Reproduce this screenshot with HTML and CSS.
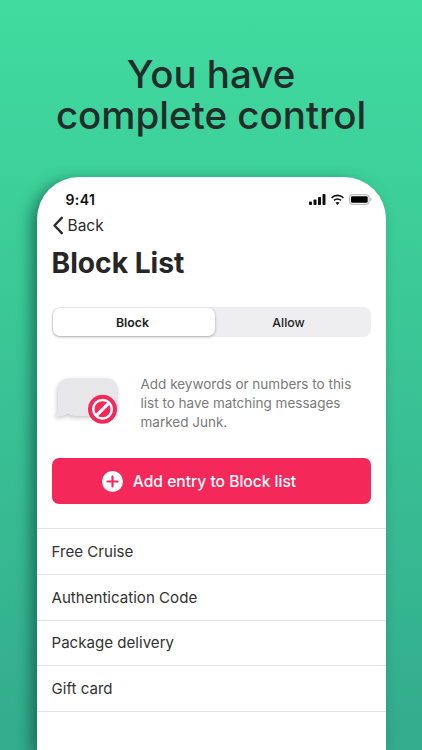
FILE: index.html
```html
<!DOCTYPE html>
<html lang="en">
<head>
<meta charset="utf-8">
<title>Block List</title>
<link rel="stylesheet" href="styles.css">
</head>
<body>
<main class="poster">
  <h1 class="headline">You have<br>complete control</h1>
  <section class="phone">
    <div class="status">
      <span class="time">9:41</span>
      <span class="status-icons">
        <svg class="signal" width="17" height="11" viewBox="0 0 17 11"><rect x="0" y="7.5" width="3" height="3.5" rx=".8"/><rect x="4.5" y="5.5" width="3" height="5.5" rx=".8"/><rect x="9" y="3" width="3" height="8" rx=".8"/><rect x="13.5" y="0" width="3" height="11" rx=".8"/></svg>
        <svg class="wifi" width="15" height="11" viewBox="0 0 15 11"><path d="M7.5 2.3c2.1 0 4 .8 5.4 2.1l1.1-1.2A9.6 9.6 0 0 0 7.500.6 9.600 9.600 0 0 0 1 3.200l1.100 1.200a7.900 7.900 0 0 1 5.400-2.100zM7.500 5.800c1.100 0 2.100.4 2.900 1.100l1.100-1.200a5.900 5.900 0 0 0-8 0l1.100 1.200c.8-.7 1.800-1.100 2.900-1.100zM7.500 11l2-2.200a3 3 0 0 0-4 0z"/></svg>
        <svg class="battery" width="23" height="11" viewBox="0 0 24 11"><rect x=".5" y=".5" width="20.500" height="10" rx="2.800" fill="none" stroke="#aaa"/><rect x="2" y="2" width="17.500" height="7" rx="1.500" fill="#000"/><path d="M22.300 3.800c.8.300 1.300 1 1.300 1.700s-.5 1.400-1.300 1.700z" fill="#aaa"/></svg>
      </span>
    </div>
    <a class="back">
      <svg width="12" height="19" viewBox="0 0 12 19"><path d="M9.800 1.800 2.500 9.500l7.300 7.700" fill="none" stroke="#2b2b2b" stroke-width="2.400" stroke-linecap="round" stroke-linejoin="round"/></svg>
      <span>Back</span>
    </a>
    <h2 class="title">Block List</h2>
    <div class="segments">
      <div class="segment active">Block</div>
      <div class="segment">Allow</div>
    </div>
    <div class="info">
      <svg class="bubble" width="68" height="52" viewBox="0 0 68 52">
        <path class="bubble-body" d="M20 3h32c9 0 14 4 14 13v12c0 9-5 13-14 13H24c-4 0-6-1-8-2.500-3 2-7 3-13 2.500 3-2 3-5 3-9V16C6 7 11 3 20 3z" fill="#e7e7ea"/>
        <circle cx="50.500" cy="34.300" r="14.500" fill="#f5285a"/>
        <circle cx="50.500" cy="34.300" r="9.300" fill="#f5285a" stroke="#fff" stroke-width="2.500"/>
        <path d="M44 40.800 57 27.800" stroke="#fff" stroke-width="3.200"/>
      </svg>
      <p class="info-text">Add keywords or numbers to this list to have matching messages marked Junk.</p>
    </div>
    <button class="add">
      <svg width="21" height="21" viewBox="0 0 21 21"><circle cx="10.500" cy="10.500" r="10.500" fill="#fff"/><path d="M10.500 5.500v10M5.500 10.500h10" stroke="#f5285a" stroke-width="2.200" stroke-linecap="round"/></svg>
      <span>Add entry to Block list</span>
    </button>
    <ul class="entries">
      <li>Free Cruise</li>
      <li>Authentication Code</li>
      <li>Package delivery</li>
      <li>Gift card</li>
    </ul>
  </section>
</main>
</body>
</html>
```
FILE: styles.css
```css
* { box-sizing: border-box; }
html, body { margin: 0; height: 100%; }
body { overflow: hidden; font-family: "Inter", "Open Sans", sans-serif; color: #262626; }
.poster {
  width: 422px; height: 750px; overflow: hidden;
  display: flex; flex-direction: column; align-items: center;
  background: linear-gradient(180deg, #40db9f 0%, #3ccb98 35%, #33ab8d 100%);
}
.headline {
  margin: 54px 0 0; height: 123px;
  font-size: 38.500px; line-height: 41px; font-weight: 500; text-align: center; color: #222d2a;
  white-space: nowrap;
}
.phone {
  width: 349px; flex: 1; background: #fff;
  border-radius: 42px 42px 0 0;
  box-shadow: -6px 4px 14px rgba(8, 60, 50, .55);
  padding: 0 15px;
  display: flex; flex-direction: column;
}
.status { display: flex; justify-content: space-between; align-items: center; height: 17px; margin-top: 14px; padding: 0 0 0 14px; }
.time { font-size: 14px; font-weight: 600; color: #111; letter-spacing: .4px; }
.status-icons { display: flex; align-items: center; gap: 4px; margin-right: -1px; }
.signal, .wifi { fill: #111; }
.back { display: flex; align-items: center; gap: 4px; height: 22px; margin-top: 6px; font-size: 15.500px; color: #2b2b2b; }
.title { margin: 7px 0 0; font-size: 28.200px; line-height: 40px; font-weight: 700; color: #262626; }
.segments { display: flex; margin-top: 24px; height: 30px; background: #eeeef0; border-radius: 8px; }
.segment { flex: 1; display: flex; align-items: center; justify-content: center; font-size: 12.300px; font-weight: 500; color: #222; padding-right: 8px; }
.segment.active { flex: 0 0 162px; margin: 1px 0 1px 1px; padding: 0 2px 0 0; background: #fff; border-radius: 7px; box-shadow: 0 1px 3px rgba(0,0,0,.3); font-weight: 600; }
.info { display: flex; align-items: flex-start; margin-top: 38px; }
.bubble { flex: none; margin-right: 21px; overflow: visible; }
.bubble-body { filter: drop-shadow(-1px 2px 2px rgba(0, 0, 0, .22)); }
.info-text { margin: 0; width: 232px; font-size: 13.500px; line-height: 19px; color: #7a7a7a; }
.add {
  margin-top: 26px; height: 46px; width: 100%; border: 0; border-radius: 7px; background: #f5285a; color: #fff;
  display: flex; align-items: center; justify-content: center; gap: 10px;
  font: 500 15.600px "Inter", sans-serif; padding: 0 24px 0 0;
}
.entries { list-style: none; margin: 24px -15px 0; padding: 0; border-top: 1px solid #e4e4e4; }
.entries li { height: 45.750px; padding: 0 15px; display: flex; align-items: center; font-size: 15.100px; color: #333; border-bottom: 1px solid #e4e4e4; }
```
